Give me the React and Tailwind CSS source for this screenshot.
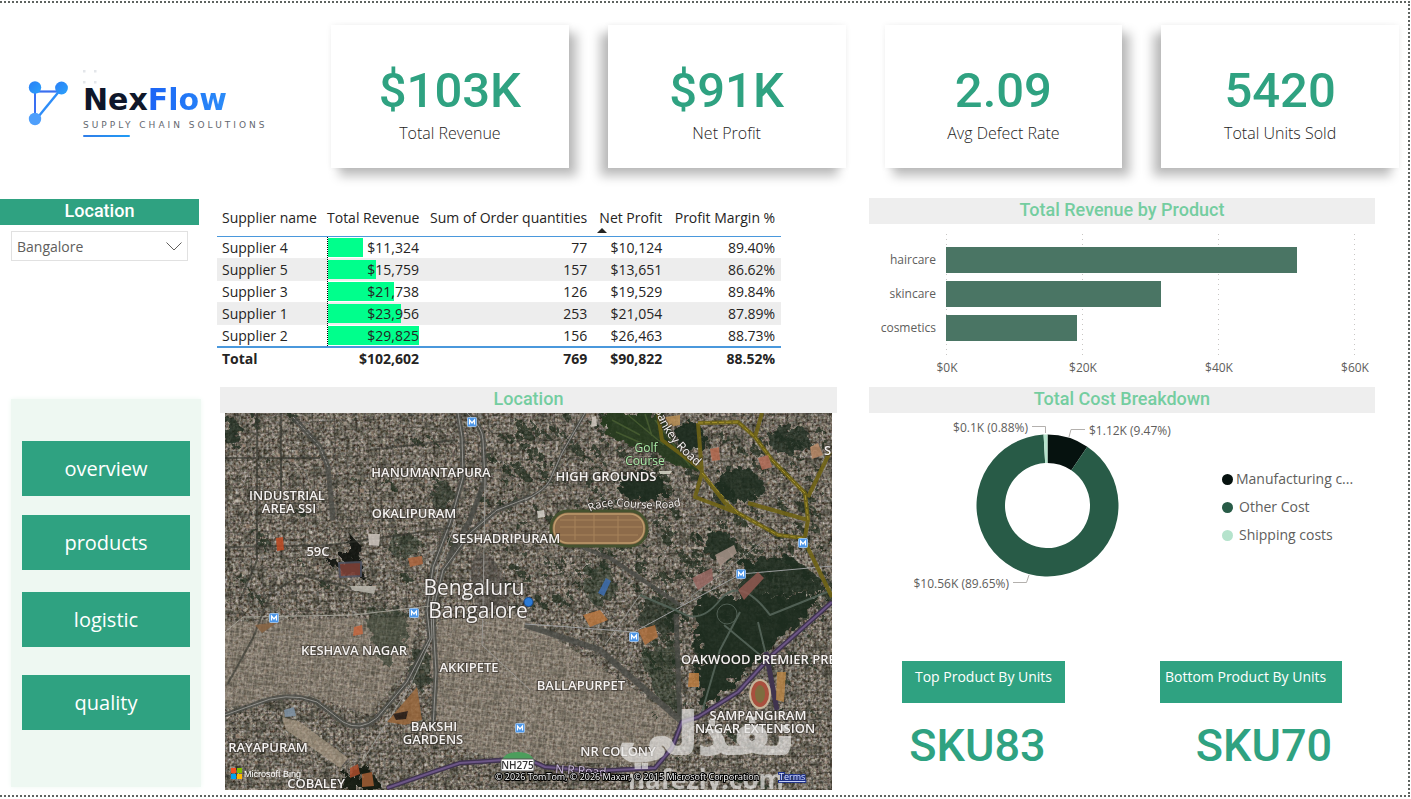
import React from "react";

const KPIS = [
  { value: "$103K", label: "Total Revenue", side: "right" },
  { value: "$91K", label: "Net Profit", side: "left" },
  { value: "2.09", label: "Avg Defect Rate", side: "right" },
  { value: "5420", label: "Total Units Sold", side: "left" },
];

const SHADOWS = {
  right: "shadow-[8px_8px_10px_rgba(0,0,0,0.26),0_0_6px_rgba(0,0,0,0.06)]",
  left: "shadow-[-8px_8px_10px_rgba(0,0,0,0.26),0_0_6px_rgba(0,0,0,0.06)]",
};

const SUPPLIERS = [
  { name: "Supplier 4", revenue: 11324, qty: 77, profit: "$10,124", margin: "89.40%" },
  { name: "Supplier 5", revenue: 15759, qty: 157, profit: "$13,651", margin: "86.62%" },
  { name: "Supplier 3", revenue: 21738, qty: 126, profit: "$19,529", margin: "89.84%" },
  { name: "Supplier 1", revenue: 23956, qty: 253, profit: "$21,054", margin: "87.89%" },
  { name: "Supplier 2", revenue: 29825, qty: 156, profit: "$26,463", margin: "88.73%" },
];
const MAX_REVENUE = 29825;

const DIN = "font-['Roboto',sans-serif]";

function Logo() {
  return (
    <div className="flex items-start gap-[14px] pl-[27px] pt-[65px]">
      <svg className="mt-[12px] h-[48px] w-[42px]" viewBox="27 80 42 48" fill="none" aria-hidden="true">
        <defs>
          <linearGradient id="node" x1="0" y1="0" x2="1" y2="1">
            <stop offset="0" stopColor="#2b7ff6" />
            <stop offset="1" stopColor="#2ba2fb" />
          </linearGradient>
        </defs>
        <path d="M35 91.500H60" stroke="#3a6ff0" strokeWidth="2.200" />
        <path d="M35 88V118" stroke="#3a70f2" strokeWidth="2" />
        <path d="M61 89L36 119.500" stroke="#2e8df8" strokeWidth="2.400" />
        <circle cx="35" cy="87.500" r="6.200" fill="url(#node)" />
        <circle cx="61.500" cy="88" r="6.400" fill="url(#node)" />
        <circle cx="35" cy="119" r="6.200" fill="#4f9ffb" />
      </svg>
      <div>
        <svg className="block h-[16px] w-[16px]" viewBox="0 0 16 16" fill="#e3e6ea" aria-hidden="true">
          <rect x="0" y="2" width="2.500" height="2.500" />
          <rect x="11" y="2" width="2.500" height="2.500" />
          <rect x="0" y="13" width="2.500" height="2.500" />
          <rect x="11" y="13" width="2.500" height="2.500" />
        </svg>
        <div className="font-['DejaVu_Sans',sans-serif] text-[30px] leading-[32px] font-bold text-[#0f172a]">
          Nex<span className="bg-gradient-to-r from-[#1d63f5] to-[#2c8cf8] bg-clip-text text-transparent">Flow</span>
        </div>
        <div className="mt-[3px] font-['DejaVu_Sans',sans-serif] text-[9px] leading-[12px] tracking-[3px] whitespace-nowrap text-[#64686f]">
          SUPPLY CHAIN SOLUTIONS
        </div>
        <div className="mt-[4px] h-[2px] w-[47px] rounded-full bg-gradient-to-r from-[#2f7de8] to-[#1e9bf5]" />
      </div>
    </div>
  );
}

function SectionTitle({ children }) {
  return (
    <h2 className={`h-[26px] bg-[#eeeeee] text-center text-[18px] leading-[24px] font-medium text-[#74cda0] ${DIN}`}>
      {children}
    </h2>
  );
}

function SupplierTable() {
  const right = "pr-[6px] text-right font-normal";
  return (
    <table className="w-[91%] table-fixed border-collapse text-[14px] leading-[21px] whitespace-nowrap text-[#252423]">
      <colgroup>
        <col className="w-[110px]" />
        <col className="w-[98px]" />
        <col />
        <col className="w-[75px]" />
        <col className="w-[113px]" />
      </colgroup>
      <thead className="border-b border-[#4a98dc]">
        <tr className="h-[38px]">
          <th className="pt-[2px] pl-[5px] text-left font-normal">Supplier name</th>
          <th className={`pt-[2px] ${right}`}>Total Revenue</th>
          <th className={`pt-[2px] ${right}`}>Sum of Order quantities</th>
          <th className={`relative pt-[2px] ${right}`}>
            Net Profit
            <svg className="absolute bottom-[3px] left-[4px] h-[5px] w-[10px]" viewBox="0 0 10 5" aria-hidden="true">
              <path d="M0 5L5 0L10 5Z" fill="#252423" />
            </svg>
          </th>
          <th className={`pt-[2px] ${right}`}>Profit Margin %</th>
        </tr>
      </thead>
      <tbody>
        {SUPPLIERS.map((s) => (
          <tr key={s.name} className="h-[22px] border-b border-[#eeeeee] last:border-b-2 last:border-[#4a98dc] even:bg-[#ededed]">
            <td className="pl-[5px]">{s.name}</td>
            <td className="p-0 pr-[6px]">
              <div className="relative border-l border-dotted border-black text-right">
                <div
                  className="absolute inset-y-px left-0 bg-[#00ff8c]"
                  style={{ width: `${(s.revenue / MAX_REVENUE) * 100}%` }}
                />
                <span className="relative">${s.revenue.toLocaleString("en-US")}</span>
              </div>
            </td>
            <td className={right}>{s.qty}</td>
            <td className={right}>{s.profit}</td>
            <td className={right}>{s.margin}</td>
          </tr>
        ))}
      </tbody>
      <tfoot>
        <tr className="h-[22px] font-bold">
          <td className="pl-[5px]">Total</td>
          <td className="pr-[6px] text-right">$102,602</td>
          <td className="pr-[6px] text-right">769</td>
          <td className="pr-[6px] text-right">$90,822</td>
          <td className="pr-[6px] text-right">88.52%</td>
        </tr>
      </tfoot>
    </table>
  );
}

/* Small deterministic generator, so the rooftops are the same on every render. */
function makeRandom(start) {
  let seed = start;
  return () => {
    seed = (seed * 16807) % 2147483647;
    return seed / 2147483647;
  };
}
const rnd = makeRandom(7);
const TONES = ["#d3ccc2", "#b5ada2", "#8d8478", "#3a3a32", "#c6beb4", "#b3a798", "#9a7f6c", "#8e8f8c", "#25291f"];
const ROOFS = Array.from({ length: 2200 }, (_, i) => ({
  i,
  x: 225 + rnd() * 607,
  y: 413 + rnd() * 377,
  w: 1 + rnd() * 3,
  h: 1 + rnd() * 3,
  fill: TONES[Math.floor(rnd() * TONES.length)],
  o: 0.25 + rnd() * 0.45,
}));
const TREES = Array.from({ length: 420 }, (_, i) => ({
  i,
  x: i % 3 ? 500 + rnd() * 332 : 225 + rnd() * 607,
  y: i % 3 ? 413 + rnd() * 250 : 413 + rnd() * 377,
  r: 1.5 + rnd() * 3.5,
}));

const MAP_LABELS = [
  ["HANUMANTAPURA", 431, 477],
  ["INDUSTRIAL", 287, 500],
  ["AREA SSI", 289, 513],
  ["OKALIPURAM", 414, 518],
  ["HIGH GROUNDS", 606, 481],
  ["SESHADRIPURAM", 506, 543],
  ["59C", 318, 556],
  ["KESHAVA NAGAR", 354, 655],
  ["AKKIPETE", 469, 672],
  ["BALLAPURPET", 581, 690],
  ["BAKSHI", 434, 731],
  ["GARDENS", 433, 744],
  ["RAYAPURAM", 268, 752],
  ["COBALEY", 316, 788],
  ["NR COLONY", 618, 756],
  ["SAMPANGIRAM", 758, 720],
  ["NAGAR EXTENSION", 755, 733],
];

const METRO = [
  [472, 422], [803, 543], [741, 574], [274, 618], [414, 613], [634, 637], [520, 728],
];

function SatelliteMap() {
  return (
    <svg
      className="block h-[377px] w-full font-['Open_Sans',sans-serif]"
      viewBox="225 413 607 377"
      preserveAspectRatio="xMidYMid slice"
      role="img"
      aria-label="Map of Bengaluru"
    >
      <defs>
        <filter id="ground" x="0" y="0" width="100%" height="100%" colorInterpolationFilters="sRGB">
          <feTurbulence type="fractalNoise" baseFrequency="0.36" numOctaves="2" seed="4" />
          <feColorMatrix values="0.85 0.12 0 0 -0.02  0.85 0 0 0 0.01  0.85 0 0.1 0 -0.08  0 0 0 0 1" />
        </filter>
        <filter id="shade" x="0" y="0" width="100%" height="100%" colorInterpolationFilters="sRGB">
          <feTurbulence type="fractalNoise" baseFrequency="0.09" numOctaves="3" seed="21" />
          <feColorMatrix values="0 0 0 0 0.13  0 0 0 0 0.15  0 0 0 0 0.11  4 0 0 0 -1.9" />
        </filter>
        <filter id="canopy" x="-10%" y="-10%" width="120%" height="120%" colorInterpolationFilters="sRGB">
          <feTurbulence type="fractalNoise" baseFrequency="0.12" numOctaves="3" seed="3" result="n" />
          <feDisplacementMap in="SourceGraphic" in2="n" scale="22" />
        </filter>
        <pattern id="streets" width="11" height="9" patternUnits="userSpaceOnUse" patternTransform="rotate(-2)">
          <path d="M0 .5H11M.5 0V9" stroke="#23241f" strokeOpacity=".3" />
          <path d="M5 0V9M0 5H11" stroke="#d8cdbd" strokeOpacity=".14" />
        </pattern>
        <pattern id="lanes" width="5" height="6" patternUnits="userSpaceOnUse" patternTransform="rotate(8)">
          <path d="M0 .5H5M.5 0V6" stroke="#e0d3bd" strokeOpacity=".18" />
        </pattern>
        <path id="sankey" d="M652 392C656 425 668 443 706 474" />
        <path id="raceRoad" d="M590 512C615 498 640 516 684 505" />
      </defs>

      <rect x="225" y="413" width="607" height="377" fill="#6b645a" />
      <rect x="225" y="413" width="607" height="377" filter="url(#ground)" />
      <rect x="225" y="413" width="607" height="377" filter="url(#shade)" opacity=".4" />
      <rect x="225" y="413" width="607" height="377" fill="url(#streets)" />
      <g>
        {ROOFS.map((r) => (
          <rect key={r.i} x={r.x} y={r.y} width={r.w} height={r.h} fill={r.fill} opacity={r.o} />
        ))}
      </g>

      <g fill="#8b8073" opacity=".45">
        <path d="M225 622L420 616L405 670L370 715L310 695L225 708Z" />
        <path d="M440 620L520 615L680 720L660 765L500 760L440 740L430 660Z" />
      </g>
      <path d="M225 622L420 616L405 670L370 715L310 695L225 708Z" fill="url(#lanes)" />
      <path d="M440 620L520 615L680 720L660 765L500 760L440 740L430 660Z" fill="url(#lanes)" />

      <g fill="#1b2a1b" opacity=".65" filter="url(#canopy)">
        {TREES.filter((t) => t.y < 610 || t.x > 650 || t.x < 230).map((t) => (
          <circle key={t.i} cx={t.x} cy={t.y} r={t.r} />
        ))}
      </g>

      <g filter="url(#canopy)" fill="#1c2b1e" opacity=".92">
        <path d="M604 413H664L672 440L702 474L680 466L640 446L606 436Z" fill="#263a1e" />
        <ellipse cx="642" cy="487" rx="24" ry="14" />
        <ellipse cx="740" cy="486" rx="22" ry="18" opacity=".9" />
        <ellipse cx="690" cy="436" rx="14" ry="14" />
        <ellipse cx="790" cy="440" rx="22" ry="14" opacity=".8" />
        <ellipse cx="719" cy="545" rx="18" ry="14" opacity=".9" />
        <path d="M745 560L790 556L822 580L818 592L760 596L736 602Z" opacity=".9" />
        <ellipse cx="600" cy="585" rx="16" ry="20" opacity=".55" />
        <ellipse cx="660" cy="615" rx="24" ry="18" opacity=".7" />
        <path d="M696 598L824 594L770 652L702 712L698 660Z" />
        <path d="M640 655L676 640L680 715L660 700Z" opacity=".55" />
        <path d="M346 530L360 545L364 580L330 566L352 550Z" fill="#10130f" />
        <path d="M366 605L410 612L405 650L385 668L372 640Z" opacity=".5" />
        <path d="M345 778L368 765L382 790H340Z" fill="#12180f" />
        <ellipse cx="405" cy="546" rx="18" ry="12" opacity=".5" />
        <ellipse cx="232" cy="432" rx="8" ry="14" opacity=".8" />
        <ellipse cx="442" cy="496" rx="10" ry="16" opacity=".6" />
        <ellipse cx="420" cy="668" rx="9" ry="22" opacity=".6" />
      </g>
      <g stroke="#4b6134" strokeWidth="1.500" opacity=".8">
        <path d="M612 420L640 435M628 415L664 445M645 414L652 436M616 432L648 446M655 420L690 466" />
      </g>

      <g fill="none" strokeLinejoin="round">
        <path d="M470 570L476 552L492 556L510 590L506 612L476 612Z" fill="#4b4844" opacity=".5" />
        <g stroke="#4a4b47" strokeWidth="5" opacity=".8">
          <path d="M458 413L462 437L463 477L450 523L433 567L427 610L430 638L407 682L377 718Q360 732 343 722L317 702Q287 690 253 705L225 715" />
          <path d="M530 497L497 510L470 533L443 570L433 610L434 638L436 672L433 728" />
          <path d="M467 413Q483 428 483 440L485 480L470 520L447 560" />
          <path d="M525 500Q545 490 550 480L562 453L585 413" strokeWidth="3" />
          <path d="M293 417L320 447L328 467L333 520" />
          <path d="M525 625L600 650L682 722" strokeWidth="6" />
          <path d="M576 545L610 558L680 605" strokeWidth="4" />
          <path d="M676 614L680 720" />
        </g>
        <g stroke="#9a9995" strokeWidth="1" opacity=".9">
          <path d="M458 413L462 437L463 477L450 523L433 567L427 610L430 638L407 682L377 718Q360 732 343 722L317 702Q287 690 253 705L225 715" />
          <path d="M456 523L438 567L431 610L432 638L411 684L362 762" />
          <path d="M530 497L497 510L470 533L443 570L433 610L434 638L436 672L433 728" />
          <path d="M467 413Q483 428 483 440L485 480L483 610L482 645L530 690" />
          <path d="M525 500Q545 490 550 480L562 453L585 413" />
          <path d="M225 632L243 617L353 615L413 608L430 606" stroke="#a8a69d" />
          <path d="M525 624L570 627L634 632L741 574L832 566" stroke="#a4a6a8" />
          <path d="M605 645L640 595" />
          <path d="M680 605L770 536" stroke="#8a8a86" />
          <path d="M293 417L320 447L328 467" strokeDasharray="3 2" />
          <path d="M740 612L720 650L702 712M724 625L760 655M758 622L766 655M640 595L680 612Q700 625 720 600T770 615L832 590" stroke="#56655a" strokeWidth="2" />
          <circle cx="727" cy="614" r="10" stroke="#56655a" />
        </g>
        <g stroke="#33362f" strokeWidth="2" opacity=".6">
          <path d="M257 413V560L240 600M281 413V520M225 458H320M225 547L330 545L450 528M270 595L253 638L227 685M380 595L300 575L262 600M370 450L455 440" />
        </g>
        <g stroke="#6f6315" strokeWidth="4" opacity=".9">
          <path d="M698 423L738 422L755 437L772 460L805 493L808 520L805 537M698 423L702 473L695 497L738 513L778 535L803 538L832 597M702 473L725 503L738 513M748 503L808 520M830 452L808 497M755 437L762 413M658 413L662 440L702 470" />
        </g>
        <path d="M698 423L738 422L755 437L772 460L805 493L808 520M702 473L738 513L778 535L803 538" stroke="#a4932b" strokeWidth="1" strokeDasharray="5 2" />
        <path d="M387 788L433 772L460 763L503 760L525 758L545 767L598 771L655 768L672 748L682 722L698 717L738 692L772 655L832 602M766 652L777 710" stroke="#40344f" strokeWidth="5" />
        <path d="M387 788L433 772L460 763L503 760L525 758L545 767L598 771L655 768L672 748L682 722L698 717L738 692L772 655L832 602" stroke="#6c5686" strokeWidth="2" />
      </g>

      <rect x="551" y="511" width="96" height="35" rx="17" fill="#8d6b4a" stroke="#45522f" strokeWidth="3" />
      <rect x="554" y="514" width="90" height="29" rx="14" fill="none" stroke="#bd9b6c" strokeWidth="1.500" />
      <path d="M560 520H640M560 527H642M560 535H638M594 514V543M575 516V540M618 516V542" stroke="#b38d63" strokeWidth="1" opacity=".7" />
      <ellipse cx="760" cy="694" rx="10" ry="14" fill="#a9503e" stroke="#c6b59a" strokeWidth="2" />
      <ellipse cx="760" cy="694" rx="5" ry="9" fill="#7d6d3f" />
      <g opacity=".85">
        <path d="M417 687L422 720L405 725L387 722Z" fill="#99673c" />
        <path d="M393 714L408 711L406 719L396 720Z" fill="#2b1d16" />
        <path d="M339 563L361 562L361 576L340 577Z" fill="#84443a" stroke="#535665" strokeWidth="2" />
        <path d="M408 558L422 556L423 564L410 567Z" fill="#b0673f" />
        <path d="M276 538L283 537L284 550L277 551Z" fill="#c04a22" />
        <path d="M354 627L362 625L363 634L353 636Z" fill="#c5663e" />
        <path d="M583 615L600 610L608 620L590 627Z" fill="#b9763f" />
        <path d="M638 630L655 625L658 637L645 645Z" fill="#b07240" />
        <path d="M689 673L699 673L699 687L688 687Z" fill="#bb7c40" />
        <path d="M777 672L786 672L784 702L776 700Z" fill="#b78546" />
        <path d="M598 593L606 578L611 581L604 596Z" fill="#3f6fb3" />
        <path d="M692 578L712 568L713 580L698 590Z" fill="#9a6964" />
        <path d="M738 590L758 572L764 578L744 600Z" fill="#935a52" />
        <path d="M715 555L734 545L737 553L720 566Z" fill="#a79489" />
        <path d="M810 447L818 443L823 455L812 459Z" fill="#b98866" />
        <path d="M665 417L680 415L680 425L668 427Z" fill="#b98f55" />
        <path d="M284 710L294 707L296 716L285 717Z" fill="#7f93a6" />
        <path d="M282 717L300 722L348 758L340 768L318 752L286 730Z" fill="#a89883" opacity=".8" />
        <path d="M350 768L358 764L360 774L350 778Z" fill="#ad4d2c" />
        <path d="M362 774L372 772L374 786L362 787Z" fill="#a45f36" />
        <path d="M350 586L376 586L374 594L352 590Z" fill="#bcb9af" />
        <path d="M368 534L380 534L379 546L369 545Z" fill="#cdc5bd" />
        <path d="M592 417L596 416L597 426L591 427Z" fill="#d4cdc3" />
        <path d="M537 511L544 510L545 517L538 518Z" fill="#d7d4cc" />
        <path d="M659 471L672 471L670 474L660 474Z" fill="#dad9cc" />
        <path d="M255 625L278 622L262 633Z" fill="#876242" />
        <path d="M710 449L719 447L720 460L712 461Z" fill="#b5694f" />
        <path d="M758 458L768 455L772 467L762 470Z" fill="#b46d58" />
      </g>

      {METRO.map(([x, y]) => (
        <g key={`${x}-${y}`}>
          <rect x={x - 4.5} y={y - 4.5} width="9" height="9" rx="1" fill="#4c96e8" stroke="#a9cdf4" strokeWidth=".8" />
          <path d={`M${x - 2.5} ${y + 2.5}V${y - 2}L${x} ${y + 1}L${x + 2.5} ${y - 2}V${y + 2.5}`} fill="none" stroke="#fff" strokeWidth="1.200" />
        </g>
      ))}
      <circle cx="528.500" cy="602" r="4.500" fill="#2b7bd6" stroke="#17488c" />

      <g fontSize="13" fontWeight="600" fill="#f4f1f0" stroke="#2a2522" strokeWidth="2" strokeOpacity=".5" style={{ paintOrder: "stroke" }}>
        {MAP_LABELS.map(([t, x, y]) => (
          <text key={t} x={x} y={y} textAnchor="middle">{t}</text>
        ))}
        <text x="681" y="664">OAKWOOD PREMIER PRE</text>
        <text x="824" y="455">S</text>
        <g fontSize="12" fill="#a8eba6" fontWeight="400" textAnchor="middle">
          <text x="646" y="452">Golf</text>
          <text x="645" y="465">Course</text>
        </g>
        <g fontSize="12" fontWeight="400">
          <text><textPath href="#sankey" startOffset="18">Sankey Road</textPath></text>
          <text fontSize="11"><textPath href="#raceRoad">Race Course Road</textPath></text>
          <text x="555" y="773" fill="#cbb9dd" transform="rotate(4 555 773)">N R Road</text>
        </g>
        <g fontSize="21" fontWeight="400" textAnchor="middle">
          <text x="474" y="595">Bengaluru</text>
          <text x="478" y="618">Bangalore</text>
        </g>
      </g>

      <path d="M501 762Q504 752 518 752T535 762Z" fill="#4c9e5c" />
      <rect x="501" y="759" width="33" height="12" rx="1" fill="#fff" stroke="#555" />
      <text x="517.500" y="769" fontSize="10" fontWeight="600" textAnchor="middle" fill="#333">NH275</text>

      <g>
        <rect x="231" y="768" width="5" height="5" fill="#f25022" />
        <rect x="237" y="768" width="5" height="5" fill="#7fba00" />
        <rect x="231" y="774" width="5" height="5" fill="#00a4ef" />
        <rect x="237" y="774" width="5" height="5" fill="#ffb900" />
        <text x="244" y="777" fontSize="9" fill="#fff" className="font-['Liberation_Sans',sans-serif]">Microsoft Bing</text>
      </g>

      <g fill="#e9e8e6" stroke="#e9e8e6" opacity=".68" textAnchor="middle" fontWeight="700">
        <text x="706" y="754" fontSize="58" strokeWidth="2" className="font-['DejaVu_Sans',sans-serif]">نفذلي</text>
        <text x="706" y="789" fontSize="26" strokeWidth="0">nafezly.com</text>
      </g>

      <g fontSize="9" fill="#fff" stroke="#000" strokeWidth="2" style={{ paintOrder: "stroke" }}>
        <text x="495" y="780">© 2026 TomTom, © 2026 Maxar, © 2015 Microsoft Corporation</text>
        <a href="#terms">
          <text x="779" y="780" fill="#dbe4ff" stroke="#1c2f8a" textDecoration="underline">Terms</text>
        </a>
      </g>
    </svg>
  );
}

function RevenueChart() {
  const bars = [
    ["haircare", 247, 351],
    ["skincare", 281, 215],
    ["cosmetics", 315, 131],
  ];
  const ticks = [["$0K", 946], ["$20K", 1082], ["$40K", 1218], ["$60K", 1354]];
  return (
    <svg className="block w-full" viewBox="869 224 506 163" role="img" aria-label="Total revenue by product" fill="#605e5c" fontSize="12">
      {ticks.map(([t, x]) => (
        <g key={t}>
          <path d={`M${x + 0.5} 234V356`} stroke="#c8c6c4" strokeDasharray="1 4" />
          <text x={x + 1} y="372" textAnchor="middle">{t}</text>
        </g>
      ))}
      {bars.map(([t, y, w]) => (
        <g key={t}>
          <rect x="946" y={y} width={w} height="26" fill="#4a7564" />
          <text x="936" y={y + 17} textAnchor="end">{t}</text>
        </g>
      ))}
    </svg>
  );
}

function CostChart() {
  const cx = 1047.5;
  const cy = 505.5;
  const slice = (from, to) => {
    const pt = (f, r) => {
      const a = f * 2 * Math.PI;
      return `${cx + r * Math.sin(a)} ${cy - r * Math.cos(a)}`;
    };
    const big = to - from > 0.5 ? 1 : 0;
    return `M${pt(from, 71)}A71 71 0 ${big} 1 ${pt(to, 71)}L${pt(to, 42.5)}A42.5 42.5 0 ${big} 0 ${pt(from, 42.5)}Z`;
  };
  const legend = [
    ["Manufacturing c...", "bg-[#06120f]", "gap-[3px]"],
    ["Other Cost", "bg-[#285b47]", "gap-[6px]"],
    ["Shipping costs", "bg-[#b5e3cc]", "gap-[6px]"],
  ];
  return (
    <div className="flex items-start">
      <svg className="block min-w-0 flex-1" viewBox="869 413 353 187" role="img" aria-label="Total cost breakdown" fill="#605e5c" fontSize="12">
        <path d={slice(0, 0.0947)} fill="#06120f" />
        <path d={slice(0.0947, 0.9912)} fill="#285b47" />
        <path d={slice(0.9912, 1)} fill="#b5e3cc" />
        <g fill="none" stroke="#b3b0ad">
          <path d="M1032 426.500H1045.500V433" />
          <path d="M1069 437L1071 429.500H1085" />
          <path d="M1013 582.500H1026.500L1029 575" />
        </g>
        <text x="1028" y="432" textAnchor="end">$0.1K (0.88%)</text>
        <text x="1089" y="435">$1.12K (9.47%)</text>
        <text x="1009" y="588" textAnchor="end">$10.56K (89.65%)</text>
      </svg>
      <ul className="flex w-[153px] flex-col gap-[6px] pt-[55px] text-[14px] leading-[22px] text-[#605e5c]">
        {legend.map(([t, dot, gap]) => (
          <li key={t} className={`flex items-center whitespace-nowrap ${gap}`}>
            <span className={`size-[11px] rounded-full ${dot}`} />
            {t}
          </li>
        ))}
      </ul>
    </div>
  );
}

function NavButton({ children, className }) {
  return (
    <button type="button" className={`h-[55px] w-full bg-[#2fa281] text-[20px] text-white ${className}`}>
      {children}
    </button>
  );
}

export default function App() {
  return (
    <div className="flex min-h-screen flex-col bg-white pt-px pr-px pb-[2px] font-['Open_Sans',sans-serif]">
      <div className="flex flex-1 flex-col border-t-2 border-r-2 border-b-2 border-dotted border-[#5f6461]">
        <header className="flex">
          <div className="w-[331px] shrink-0">
            <Logo />
          </div>
          <div className="grid flex-1 grid-cols-4 gap-[39px] pt-[22px] pr-[9px]">
            {KPIS.map((k) => (
              <section key={k.label} className={`flex h-[143px] flex-col items-center bg-white pt-[38px] ${SHADOWS[k.side]}`}>
                <div className={`text-[49px] leading-[56px] font-medium text-[#2fa281] ${DIN}`}>{k.value}</div>
                <div className="text-[16px] leading-[28px] font-light text-[#252423]">{k.label}</div>
              </section>
            ))}
          </div>
        </header>

        <main className="mt-[30px] grid flex-1 grid-cols-[201px_minmax(0,620fr)_minmax(0,522fr)] gap-x-4 pr-[33px] pb-[5px]">
          <aside className="flex flex-col">
            <label htmlFor="location" className={`mt-px mr-[2px] block h-[26px] bg-[#2fa281] text-center text-[18px] leading-[24px] font-medium text-white ${DIN}`}>
              Location
            </label>
            <div className="relative mt-[6px] mr-[13px] ml-[11px]">
              <select id="location" className="block h-[30px] w-full appearance-none border border-[#e1e1e1] bg-white pl-[5px] text-[14px] text-[#605e5c]" defaultValue="Bangalore">
                <option>Bangalore</option>
              </select>
              <svg className="pointer-events-none absolute top-[11px] right-[6px] h-[9px] w-[16px]" viewBox="0 0 16 9" fill="none" stroke="#605e5c" aria-hidden="true">
                <path d="M.5 .5L8 8L15.500 .5" />
              </svg>
            </div>
            <nav className="mt-[138px] mb-[3px] ml-[11px] flex-1 bg-[#eef8f2] px-[11px] pt-[42px] shadow-[0_0_5px_#eef8f2]">
              <NavButton className="">overview</NavButton>
              <NavButton className="mt-[19px]">products</NavButton>
              <NavButton className="mt-[22px]">logistic</NavButton>
              <NavButton className="mt-[28px]">quality</NavButton>
            </nav>
          </aside>

          <div>
            <div className="h-[189px]">
              <SupplierTable />
            </div>
            <section className="pl-[3px]">
              <SectionTitle>Location</SectionTitle>
              <div className="px-[5px]">
                <SatelliteMap />
              </div>
            </section>
          </div>

          <div className="pl-4">
            <SectionTitle>Total Revenue by Product</SectionTitle>
            <RevenueChart />
            <SectionTitle>Total Cost Breakdown</SectionTitle>
            <CostChart />
            <div className="mt-[61px] flex justify-between pr-[33px] pl-[33px]">
              <section className="flex w-[163px] flex-col">
                <h3 className="h-[42px] bg-[#2fa281] text-center text-[14px] leading-[32px] text-white">Top Product By Units</h3>
                <p className={`mt-[16px] pr-[12px] text-center text-[45px] leading-[54px] font-medium text-[#2fa281] ${DIN}`}>SKU83</p>
              </section>
              <section className="flex w-[182px] flex-col">
                <h3 className="h-[42px] bg-[#2fa281] pl-[5px] text-[14px] leading-[32px] whitespace-nowrap text-white">Bottom Product By Units</h3>
                <p className={`mt-[16px] pl-[26px] text-center text-[45px] leading-[54px] font-medium text-[#2fa281] ${DIN}`}>SKU70</p>
              </section>
            </div>
          </div>
        </main>
      </div>
    </div>
  );
}
